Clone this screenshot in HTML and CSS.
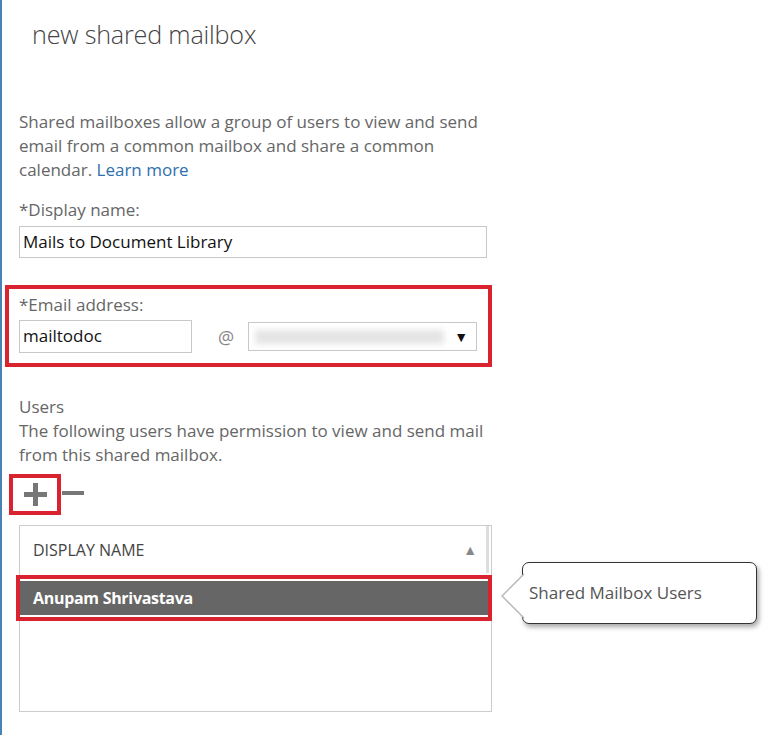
FILE: index.html
```html
<!DOCTYPE html>
<html lang="en">
<head>
    <meta charset="UTF-8">
    <meta name="viewport" content="width=device-width, initial-scale=1.0">
    <title>new shared mailbox</title>
    <link rel="stylesheet" href="styles.css">
</head>
<body>
    <div class="page">
        <h1 class="title">new shared mailbox</h1>

        <p class="intro">Shared mailboxes allow a group of users to view and send email from a common mailbox and share a common calendar. <a href="#" class="link">Learn more</a></p>

        <label class="label">*Display name:</label>
        <div class="field field-wide">Mails to Document Library</div>

        <div class="mark email">
            <label class="label">*Email address:</label>
            <div class="email-row">
                <div class="field field-alias">mailtodoc</div>
                <span class="at">@</span>
                <div class="select">
                    <span class="blur"></span>
                    <span class="caret">&#9660;</span>
                </div>
            </div>
        </div>

        <div class="users">
            <div class="label">Users</div>
            <p class="users-text">The following users have permission to view and send mail from this shared mailbox.</p>
        </div>

        <div class="tools">
            <span class="mark tool-add"><span class="plus"></span></span>
            <span class="minus"></span>
        </div>

        <div class="grid">
            <div class="grid-head">
                <span>DISPLAY NAME</span>
                <span class="sort">&#9650;</span>
            </div>
            <div class="mark grid-row">
                <div class="grid-row-in">Anupam Shrivastava</div>
            </div>
        </div>

        <div class="callout">
            <svg class="callout-tip" width="24" height="46" viewBox="0 0 24 46">
                <path d="M23 1 L1 23 L23 45" fill="#fff" stroke="#b8b8b8" stroke-width="1.5"/>
            </svg>
            Shared Mailbox Users
        </div>
    </div>
</body>
</html>
```

FILE: styles.css
```css
* {padding: 0; margin: 0; box-sizing: border-box;}
body {font-family: "Open Sans", "Noto Sans", sans-serif; color: #666; background: #fff;}
.page {position: relative; height: 735px; border-left: 2px solid #4a82b6; padding-left: 17px; width: 774px;}

.title {font-weight: 300; font-size: 25.2px; line-height: 30px; color: #444; padding: 19px 0 0 13px; letter-spacing: -0.2px;}

.intro {font-size: 17px; line-height: 24px; width: 466px; margin-top: 61px;}
.link {color: #2f6fae; text-decoration: none;}

.label {display: block; font-size: 17px; line-height: 24px; color: #666;}
.intro + .label {margin-top: 16px;}

.field {border: 1px solid #c8c8c8; height: 32px; font-size: 17px; line-height: 30px; color: #111; padding-left: 3px;}
.field-wide {width: 468px; margin-top: 4px;}

.mark {border: 4px solid #d9232e;}
.email {margin: 27px 0 0 -14px; width: 487px; padding: 4px 0 10px 10px;}
.email-row {display: flex; align-items: center; margin-top: 3px;}
.field-alias {width: 173px; height: 33px;}
.at {font-size: 18px; color: #888; margin: 0 14px 0 26px;}
.select {width: 229px; height: 29px; border: 1px solid #c8c8c8; display: flex; align-items: center; padding: 0 8px 0 6px;}
.blur {flex: 1; height: 14px; background: #e4e4e4; filter: blur(3px); margin-right: 10px;}
.caret {font-size: 14px; color: #111;}

.users {margin-top: 28px;}
.users-text {font-size: 17px; line-height: 24px; width: 470px;}

.tools {display: flex; align-items: center; margin: 7px 0 0 -10px;}
.tool-add {display: flex; align-items: center; justify-content: center; width: 52px; height: 41px;}
.plus {position: relative; width: 23px; height: 23px;}
.plus::before, .plus::after {content: ""; position: absolute; background: #777;}
.plus::before {left: 0; top: 9px; width: 23px; height: 5px;}
.plus::after {left: 9px; top: 0; width: 5px; height: 23px;}
.minus {width: 22px; height: 4px; background: #777; margin-left: 1px; margin-top: -3px;}

.grid {width: 473px; height: 187px; border: 1px solid #ccc; margin-top: 10px;}
.grid-head {height: 47px; display: flex; align-items: center; justify-content: space-between; padding: 0 9px 0 13px; font-size: 16px; color: #444; border-right: 3px solid #ddd; margin-right: 2px;}
.sort {font-size: 14px; color: #888;}
.grid-row {margin: 2px -1px 0 -4px; height: 46px;}
.grid-row-in {height: 38px; background: #666; border-top: 2px solid #fff; border-bottom: 2px solid #fff; color: #fff; font-weight: 700; font-size: 16px; line-height: 34px; padding-left: 13px; letter-spacing: -0.3px;}

.callout {position: absolute; left: 520px; top: 562px; width: 235px; height: 62px; border: 1.5px solid #333; border-radius: 7px; background: #fff; box-shadow: 2px 3px 5px rgba(0,0,0,0.35); font-size: 17px; line-height: 60px; padding-left: 6px; color: #555;}
.callout-tip {position: absolute; left: -22px; top: 10px;}
```
